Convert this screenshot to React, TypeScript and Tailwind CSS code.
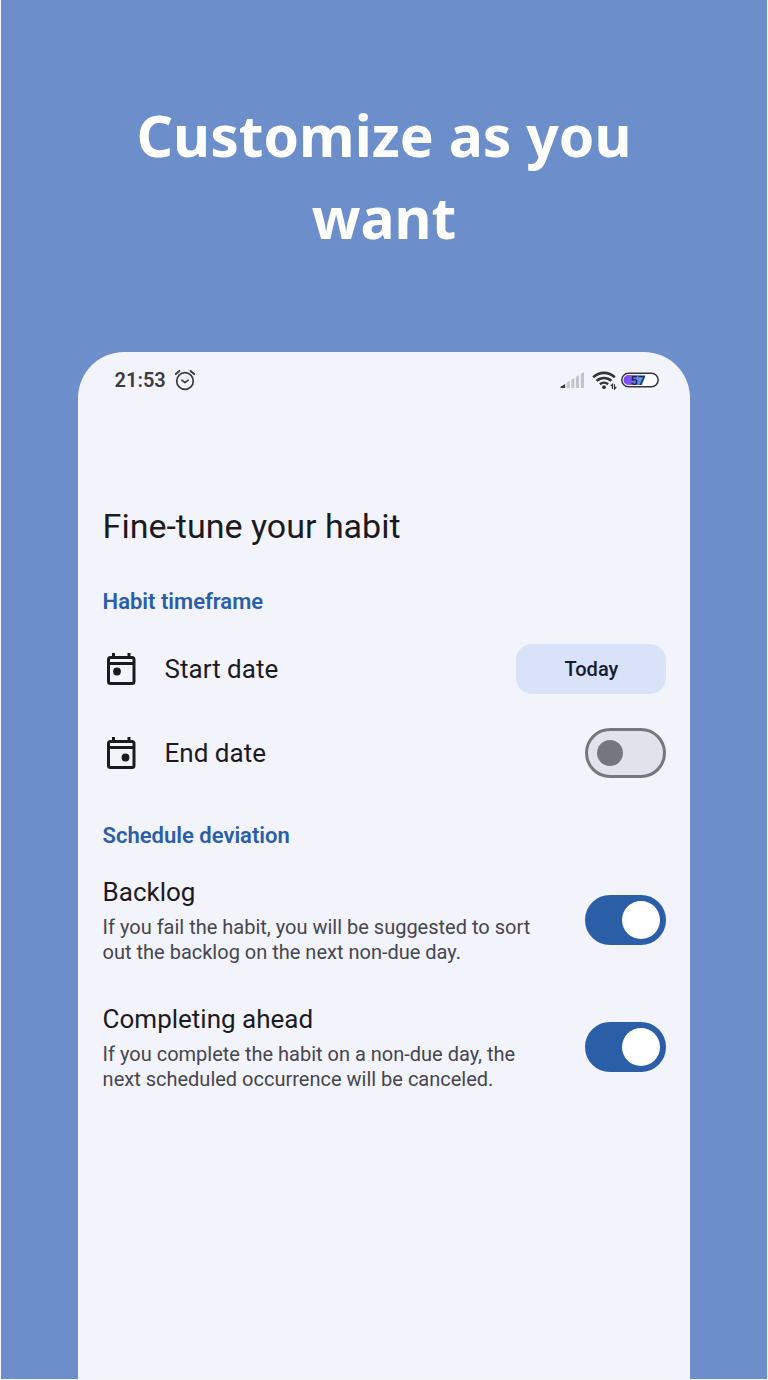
import { useState } from "react";

function AlarmIcon() {
  return (
    <svg width="22" height="22" viewBox="0 0 22 22" fill="none" stroke="#3b3b40" strokeWidth="1.7" strokeLinecap="round" strokeLinejoin="round" aria-hidden="true">
      <circle cx="11" cy="12" r="8.3" />
      <path d="M1.8 5 5.4 2M20.2 5l-3.6-3" strokeWidth="2" />
      <path d="m7.8 11.2 3.2 2.5 3.2-2.5" />
    </svg>
  );
}

function SignalIcon() {
  return (
    <svg width="24" height="18" viewBox="0 0 24 18" aria-hidden="true">
      <path d="M0.500 17v-1.2L5.200 13v4z" fill="#36363b" />
      <path d="M6.800 17v-5.4l3-1.8V17zM11.400 17V8.8L14.400 7v10zM16 17V5.8l3-1.8V17zM20.800 17V3L24 1v16z" fill="#c3c3c9" />
    </svg>
  );
}

function WifiIcon() {
  return (
    <svg width="25" height="20" viewBox="0 0 25 20" fill="none" stroke="#333338" aria-hidden="true">
      <path d="M1.2 7.2c6.2-5.8 15.4-5.8 21.6 0" strokeWidth="2.7" />
      <path d="M4.6 10.9c4.3-3.9 10.5-3.9 14.8 0" strokeWidth="2.6" />
      <path d="M7.9 14.3c2.4-2.1 5.8-2.1 8.2 0" strokeWidth="2.5" />
      <circle cx="12" cy="17.2" r="1.9" fill="#333338" stroke="none" />
      <path d="M20.5 19v-4.8l-1.8 2M22.5 14.2V19l1.8-2" strokeWidth="1.2" />
    </svg>
  );
}

function BatteryIcon() {
  return (
    <svg width="38" height="16" viewBox="0 0 38 16" role="img" aria-label="Battery 57%">
      <defs>
        <linearGradient id="charge" x1="0" x2="1">
          <stop offset="0" stopColor="#8b3ff5" />
          <stop offset="0.4" stopColor="#7465f7" />
          <stop offset="1" stopColor="#4cb4ee" />
        </linearGradient>
      </defs>
      <rect x="0.8" y="1.3" width="36.4" height="13.4" rx="6.7" fill="#fafaff" stroke="#36363b" strokeWidth="1.5" />
      <path d="M7.500 3H24.500l-3.500 10H7.500A5 5 0 0 1 7.500 3z" fill="url(#charge)" />
      <text x="17" y="12.5" textAnchor="middle" fontSize="13" fontWeight="500" fill="#25233f" fontFamily="Roboto, sans-serif">57</text>
    </svg>
  );
}

function CalendarIcon({ dotX, dotY }: { dotX: number; dotY: number }) {
  return (
    <svg className="shrink-0" width="38" height="38" viewBox="0 0 38 38" fill="none" stroke="#1b1b1f" strokeWidth="3" aria-hidden="true">
      <rect x="5.5" y="7.5" width="25.5" height="26" rx="2" />
      <path d="M5 13.6h26M10.5 3V8M26 3V8" />
      <circle cx={dotX} cy={dotY} r="3.9" fill="#1b1b1f" stroke="none" />
    </svg>
  );
}

type SwitchProps = { id: string; checked: boolean; onChange: (value: boolean) => void };

function Switch({ id, checked, onChange }: SwitchProps) {
  return (
    <input
      id={id}
      type="checkbox"
      role="switch"
      checked={checked}
      onChange={(event) => onChange(event.target.checked)}
      className="flex h-[50px] w-[81px] shrink-0 cursor-pointer appearance-none items-center rounded-full border-[3px] border-[#757680] bg-[#e0e3ec] px-[9px] before:size-[26px] before:rounded-full before:bg-[#757680] before:content-[''] checked:justify-end checked:border-[#2a5ea7] checked:bg-[#2a5ea7] checked:px-[3px] checked:before:size-[38px] checked:before:bg-white"
    />
  );
}

function SettingRow({ id, title, text, checked, onChange }: SwitchProps & { title: string; text: string }) {
  return (
    <div className="flex items-center justify-between gap-10">
      <div className="max-w-[448px]">
        <label htmlFor={id} className="block text-[26px] leading-9">{title}</label>
        <p className="mt-[5px] text-[20px] leading-[25px] text-[#45464f]">{text}</p>
      </div>
      <Switch id={id} checked={checked} onChange={onChange} />
    </div>
  );
}

export default function App() {
  const [hasEnd, setHasEnd] = useState(false);
  const [backlog, setBacklog] = useState(true);
  const [ahead, setAhead] = useState(true);

  return (
    <div className="flex min-h-screen flex-col border-x border-b border-[#f4f6fc] bg-[#6c8eca]">
      <h1 className="mx-auto max-w-[560px] pt-[94px] text-center font-['Noto_Sans',sans-serif] text-[57px] leading-[82px] font-bold text-white">
        Customize as you want
      </h1>
      <main className="mx-auto mt-[94px] w-4/5 grow rounded-t-[46px] bg-[#f3f3fc] pr-6 pb-12 pl-[25px] font-[Roboto,sans-serif] text-[#1b1b1f]">
        <div className="flex h-14 items-center justify-between pr-[7px] pl-3">
          <div className="flex items-center gap-2">
            <span className="text-[20px] leading-6 font-semibold text-[#3b3b40]">21:53</span>
            <AlarmIcon />
          </div>
          <div className="flex items-center gap-2">
            <SignalIcon />
            <div className="flex items-center gap-1">
              <WifiIcon />
              <BatteryIcon />
            </div>
          </div>
        </div>

        <h2 className="mt-24 text-[34px] leading-11">Fine-tune your habit</h2>

        <section className="mt-10">
          <h3 className="text-[22px] leading-7 font-semibold text-[#2a5ea7]">Habit timeframe</h3>
          <div className="mt-7 flex items-center justify-between">
            <div className="flex items-center gap-6">
              <CalendarIcon dotX={14} dotY={21.5} />
              <span className="text-[26px] leading-9">Start date</span>
            </div>
            <button type="button" className="h-[50px] w-[150px] rounded-2xl bg-[#dae2f9] text-[20px] font-medium text-[#131c2c]">Today</button>
          </div>
          <div className="mt-[34px] flex items-center justify-between">
            <label htmlFor="end-date" className="flex items-center gap-6">
              <CalendarIcon dotX={22.5} dotY={23.5} />
              <span className="text-[26px] leading-9">End date</span>
            </label>
            <Switch id="end-date" checked={hasEnd} onChange={setHasEnd} />
          </div>
        </section>

        <section className="mt-11">
          <h3 className="text-[22px] leading-7 font-semibold text-[#2a5ea7]">Schedule deviation</h3>
          <div className="mt-6 flex flex-col gap-9">
            <SettingRow
              id="backlog"
              title="Backlog"
              text="If you fail the habit, you will be suggested to sort out the backlog on the next non-due day."
              checked={backlog}
              onChange={setBacklog}
            />
            <SettingRow
              id="ahead"
              title="Completing ahead"
              text="If you complete the habit on a non-due day, the next scheduled occurrence will be canceled."
              checked={ahead}
              onChange={setAhead}
            />
          </div>
        </section>
      </main>
    </div>
  );
}
